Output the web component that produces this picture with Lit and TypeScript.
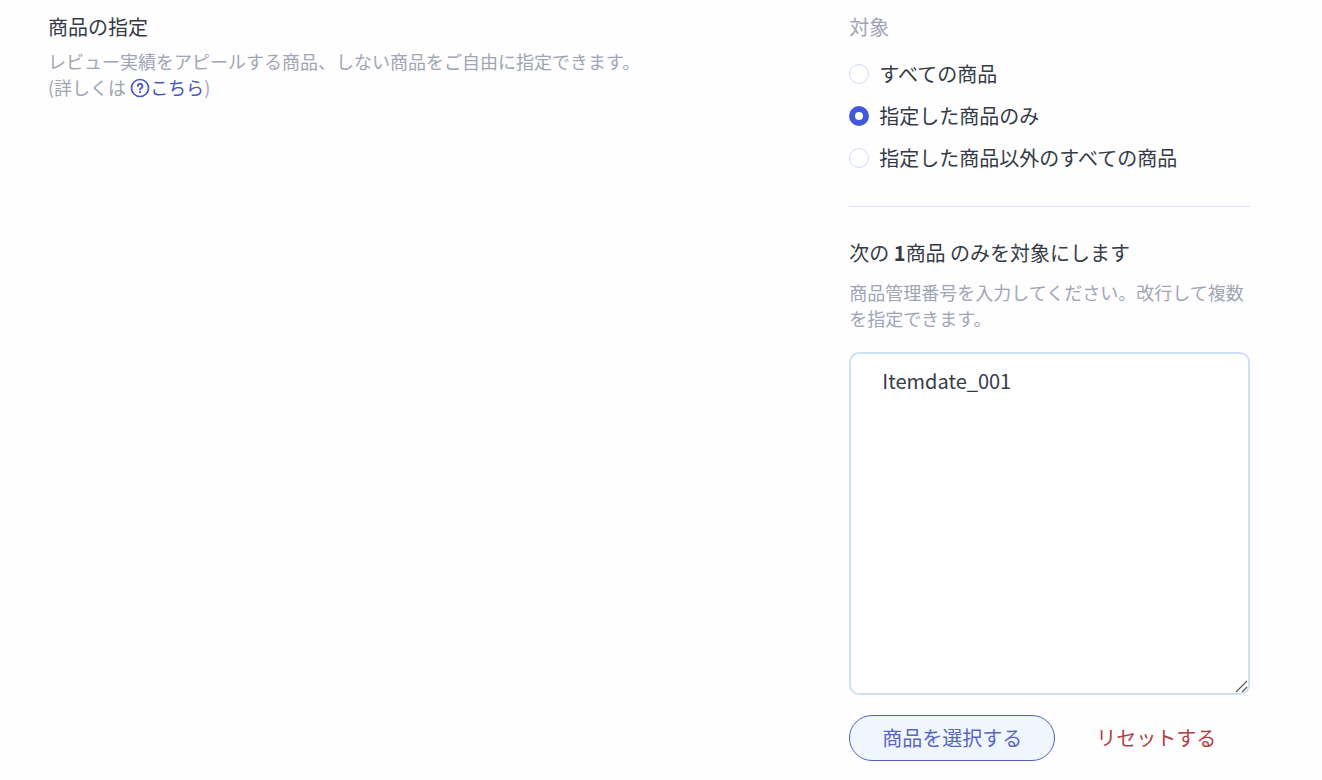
import { LitElement, html, css } from "lit";
import { customElement, state } from "lit/decorators.js";

type Target = "all" | "only" | "except";

const OPTIONS: { value: Target; label: string }[] = [
  { value: "all", label: "すべての商品" },
  { value: "only", label: "指定した商品のみ" },
  { value: "except", label: "指定した商品以外のすべての商品" },
];

@customElement("app-root")
export class AppRoot extends LitElement {
  static styles = css`
    :host {
      display: block;
      color: #353c48;
      background: #fefefe;
      min-height: 100vh;
      font-family: "Noto Sans CJK JP", "Noto Sans", sans-serif;
      font-size: 20px;
      line-height: 28px;
    }
    * {
      box-sizing: border-box;
    }
    .section {
      display: grid;
      grid-template-columns: minmax(0, 2fr) minmax(0, 1fr);
      padding: 13px 72px 19px 48px;
    }
    .heading {
      display: block;
      margin: 0;
      font-size: inherit;
      font-weight: 400;
    }
    .note {
      margin: 7px 0 0;
      color: #a0a5b5;
      font-size: 18px;
      line-height: 26px;
    }
    .help {
      color: #4656c6;
      text-decoration: none;
    }
    .help-icon {
      width: 20px;
      height: 20px;
      vertical-align: -3px;
    }
    .targets {
      display: flex;
      flex-direction: column;
      gap: 14px;
      margin: 0;
      padding: 0 0 34px;
      border: 0;
      border-bottom: 1px solid #dbe3f1;
    }
    .legend {
      padding: 0;
      margin-bottom: 19px;
      color: #a0a5b5;
    }
    .option {
      display: flex;
      align-items: center;
      gap: 10px;
    }
    .radio {
      appearance: none;
      flex: none;
      width: 20px;
      height: 20px;
      margin: 0;
      border: 1px solid #cfdcf1;
      border-radius: 50%;
      background: #fff;
    }
    .radio:checked {
      border: 6px solid #4259dc;
    }
    .items {
      padding-top: 32px;
    }
    .items .note {
      margin: 12px 0 21px;
    }
    .count {
      font-weight: 700;
    }
    .codes {
      display: block;
      width: 100%;
      height: 343px;
      margin: 0 0 20px;
      padding: 13px 31px;
      border: 2px solid #cfdff4;
      border-radius: 10px;
      outline: 0;
      background: #fff;
      color: inherit;
      font: inherit;
      resize: both;
    }
    .codes::-webkit-resizer {
      background: no-repeat right bottom / 15px 15px
        url("data:image/svg+xml,%3Csvg xmlns='http://www.w3.org/2000/svg' viewBox='0 0 15 15' stroke='%23555' stroke-width='1.1'%3E%3Cpath d='M3 14 14 3M9 14l5-5'/%3E%3C/svg%3E");
    }
    .actions {
      display: flex;
      gap: 8px;
    }
    .button {
      padding: 7px 32px;
      border: 1px solid transparent;
      border-radius: 24px;
      background: none;
      font: inherit;
      line-height: 30px;
      white-space: nowrap;
      cursor: pointer;
    }
    .select {
      border-color: #5361bd;
      background: #f0f6fe;
      color: #5966c6;
    }
    .reset {
      color: #ae4146;
    }
  `;

  @state() private target: Target = "only";
  @state() private codes = "Itemdate_001";

  private get count() {
    return this.codes.split("\n").filter((line) => line.trim()).length;
  }

  render() {
    return html`
      <section class="section">
        <div>
          <h2 class="heading">商品の指定</h2>
          <p class="note">
            レビュー実績をアピールする商品、しない商品をご自由に指定できます。<br />(詳しくは
            <a class="help" href="#help"
              ><svg class="help-icon" viewBox="0 0 20 20" fill="none" stroke="currentColor" stroke-linecap="round" stroke-linejoin="round" aria-hidden="true">
                <circle cx="10" cy="10" r="8.5" stroke-width="1.7" />
                <path d="M7.8 8.1a2.3 2.3 0 1 1 3.5 1.9c-.8.5-1.3.8-1.3 1.5" stroke-width="1.8" />
                <path d="M10 14.1v.1" stroke-width="2" /></svg
              >こちら</a
            >)
          </p>
        </div>
        <div>
          <fieldset class="targets">
            <legend class="legend">対象</legend>
            ${OPTIONS.map(
              (option) => html`
                <label class="option">
                  <input
                    class="radio"
                    type="radio"
                    name="target"
                    value=${option.value}
                    .checked=${this.target === option.value}
                    @change=${() => (this.target = option.value)}
                  />
                  <span>${option.label}</span>
                </label>
              `
            )}
          </fieldset>
          <div class="items">
            <label class="heading" for="codes"
              >次の <span class="count">${this.count}</span>商品 のみを対象にします</label
            >
            <p class="note" id="codes-note">商品管理番号を入力してください。改行して複数を指定できます。</p>
            <textarea
              class="codes"
              id="codes"
              aria-describedby="codes-note"
              spellcheck="false"
              .value=${this.codes}
              @input=${(e: Event) => (this.codes = (e.target as HTMLTextAreaElement).value)}
            ></textarea>
            <div class="actions">
              <button class="button select" type="button">商品を選択する</button>
              <button class="button reset" type="button" @click=${() => (this.codes = "")}>リセットする</button>
            </div>
          </div>
        </div>
      </section>
    `;
  }
}
